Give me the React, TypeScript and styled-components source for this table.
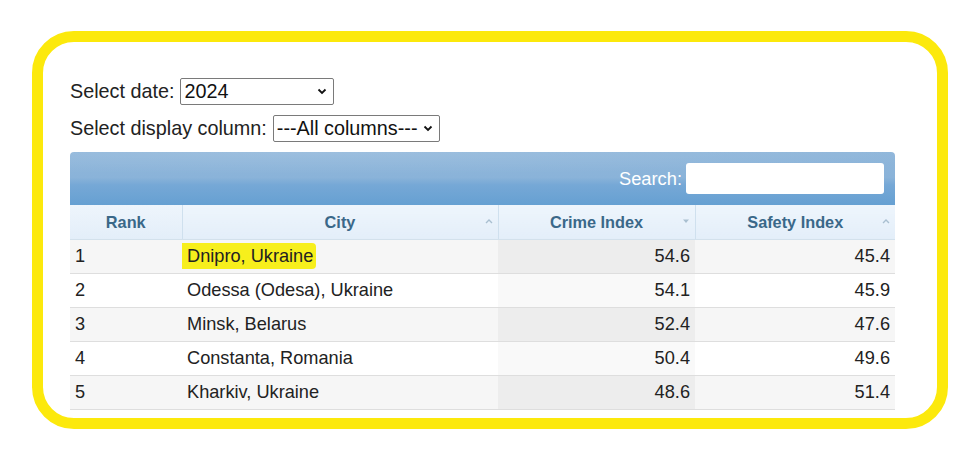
import React from "react";
import styled, { createGlobalStyle } from "styled-components";

const Global = createGlobalStyle`
  html, body { margin: 0; padding: 0; background: #ffffff; }
  body { font-family: "Liberation Sans", Arial, sans-serif; color: #222; }
`;

const Page = styled.div`
  width: 978px;
  height: 459px;
  padding: 31px 0 0 32px;
  box-sizing: border-box;
`;

const Frame = styled.div`
  width: 916px;
  height: 398px;
  box-sizing: border-box;
  border: 11px solid #fce90c;
  border-radius: 42px;
  padding: 35px 42px 0 27px;
  display: flex;
  flex-direction: column;
`;

const FormRow = styled.div<{ $gap: number }>`
  display: flex;
  align-items: center;
  height: 28px;
  margin-bottom: ${(p) => p.$gap}px;
  font-size: 19.8px;
  color: #222;
`;

const Label = styled.span`
  margin-right: 6px;
  white-space: nowrap;
`;

const SelectWrap = styled.div<{ $w: number }>`
  position: relative;
  width: ${(p) => p.$w}px;
  height: 27px;
`;

const Select = styled.select`
  appearance: none;
  -webkit-appearance: none;
  width: 100%;
  height: 100%;
  box-sizing: border-box;
  border: 1px solid #7a7a7a;
  border-radius: 2px;
  background: #fff;
  font-family: "Liberation Sans", Arial, sans-serif;
  font-size: 19.8px;
  color: #111;
  padding: 0 0 0 3px;
  outline: none;
`;

const Chevron = styled.svg`
  position: absolute;
  right: 7px;
  top: 10px;
  pointer-events: none;
`;

const TableBox = styled.div`
  width: 825px;
  display: flex;
  flex-direction: column;
`;

const TopBar = styled.div`
  height: 53px;
  border-radius: 4px 4px 0 0;
  background:
    radial-gradient(ellipse 120% 60% at 30% 0%, rgba(255,255,255,0.12), rgba(255,255,255,0) 70%),
    linear-gradient(to bottom, #8fb6da 0%, #8ab3d9 48%, #76a8d6 62%, #66a0d2 100%);
  display: flex;
  align-items: center;
  justify-content: flex-end;
  padding-right: 11px;
  box-sizing: border-box;
`;

const SearchLabel = styled.span`
  color: #ffffff;
  font-size: 18.3px;
  margin-right: 4px;
`;

const SearchInput = styled.input`
  width: 198px;
  height: 31px;
  box-sizing: border-box;
  border: none;
  border-radius: 3px;
  background: #fff;
  outline: none;
`;

const Table = styled.table`
  width: 825px;
  border-collapse: collapse;
  table-layout: fixed;
`;

const Col = styled.col<{ $w: number }>`
  width: ${(p) => p.$w}px;
`;

const Th = styled.th`
  height: 34px;
  padding: 0;
  position: relative;
  background: linear-gradient(to bottom, #eef5fc 0%, #e3eef9 100%);
  border-left: 1px solid #cfe0ee;
  border-bottom: 1px solid #d3e1ec;
  color: #3a6889;
  font-size: 16.3px;
  font-weight: bold;
  text-align: center;
  &:first-child { border-left: none; }
`;

const SortIcon = styled.svg`
  position: absolute;
  right: 5px;
  top: 13px;
`;

const Td = styled.td<{ $num?: boolean; $bg: string }>`
  height: 33px;
  padding: 0 ${(p) => (p.$num ? "5px" : "0")} 0 5px;
  background: ${(p) => p.$bg};
  border-bottom: 1px solid #dedede;
  font-size: 18.2px;
  color: #222;
  text-align: ${(p) => (p.$num ? "right" : "left")};
  white-space: nowrap;
  overflow: hidden;
`;

const Mark = styled.span`
  background: #f7ef1c;
  padding: 3px 3px 3px 8px;
  margin-left: -8px;
  border-radius: 2px 4px 4px 2px;
`;

const Up = () => (
  <SortIcon width="8" height="6" viewBox="0 0 8 6">
    <path d="M1 5 L4 2 L7 5" fill="none" stroke="#a9bfd0" strokeWidth="1.4" />
  </SortIcon>
);
const Down = () => (
  <SortIcon width="8" height="6" viewBox="0 0 8 6">
    <path d="M1 1.5 L7 1.5 L4 5 Z" fill="#a9bfd0" />
  </SortIcon>
);

const rows = [
  { rank: 1, city: "Dnipro, Ukraine", crime: "54.6", safety: "45.4", mark: true },
  { rank: 2, city: "Odessa (Odesa), Ukraine", crime: "54.1", safety: "45.9" },
  { rank: 3, city: "Minsk, Belarus", crime: "52.4", safety: "47.6" },
  { rank: 4, city: "Constanta, Romania", crime: "50.4", safety: "49.6" },
  { rank: 5, city: "Kharkiv, Ukraine", crime: "48.6", safety: "51.4" },
];

const ChevronIcon = () => (
  <Chevron width="10" height="7" viewBox="0 0 10 7">
    <path d="M1.5 1.5 L5 5 L8.5 1.5" fill="none" stroke="#111" strokeWidth="1.8" />
  </Chevron>
);

export default function App() {
  return (
    <>
      <Global />
      <Page>
        <Frame>
          <FormRow $gap={9}>
            <Label>Select date:</Label>
            <SelectWrap $w={154}>
              <Select defaultValue="2024">
                <option value="2024">2024</option>
              </Select>
              <ChevronIcon />
            </SelectWrap>
          </FormRow>
          <FormRow $gap={10}>
            <Label>Select display column:</Label>
            <SelectWrap $w={167}>
              <Select defaultValue="all">
                <option value="all">---All columns---</option>
              </Select>
              <ChevronIcon />
            </SelectWrap>
          </FormRow>
          <TableBox>
            <TopBar>
              <SearchLabel>Search:</SearchLabel>
              <SearchInput type="text" />
            </TopBar>
            <Table>
              <colgroup>
                <Col $w={112} />
                <Col $w={316} />
                <Col $w={197} />
                <Col $w={200} />
              </colgroup>
              <thead>
                <tr>
                  <Th>Rank</Th>
                  <Th>City<Up /></Th>
                  <Th>Crime Index<Down /></Th>
                  <Th>Safety Index<Up /></Th>
                </tr>
              </thead>
              <tbody>
                {rows.map((r, i) => {
                  const odd = i % 2 === 0;
                  const base = odd ? "#f6f6f6" : "#ffffff";
                  const sorted = odd ? "#ededed" : "#f9f9f9";
                  return (
                    <tr key={r.rank}>
                      <Td $bg={base}>{r.rank}</Td>
                      <Td $bg={base}>{r.mark ? <Mark>{r.city}</Mark> : r.city}</Td>
                      <Td $bg={sorted} $num>{r.crime}</Td>
                      <Td $bg={base} $num>{r.safety}</Td>
                    </tr>
                  );
                })}
              </tbody>
            </Table>
          </TableBox>
        </Frame>
      </Page>
    </>
  );
}
